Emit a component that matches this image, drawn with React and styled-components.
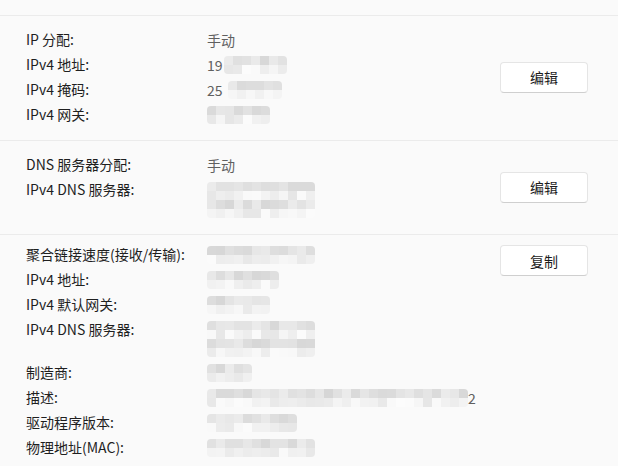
import React from "react";
import styled, { createGlobalStyle } from "styled-components";

const GlobalStyle = createGlobalStyle`
  html, body {
    margin: 0;
    padding: 0;
    background: #fafafa;
  }
  body {
    font-family: "Noto Sans CJK SC", "Noto Sans", sans-serif;
    font-size: 14px;
    color: #1b1b1b;
  }
`;

const Page = styled.div`
  width: 618px;
  height: 466px;
  overflow: hidden;
  background: #fafafa;
`;

const TopStrip = styled.div`
  height: 15px;
  border-bottom: 1px solid #ebebeb;
`;

const Section = styled.section`
  display: flex;
  align-items: ${(p) => (p.$buttonTop ? "flex-start" : "center")};
  padding: ${(p) => p.$pad || "12px 30px 11px 26px"};
  border-bottom: ${(p) => (p.$last ? "none" : "1px solid #ebebeb")};
`;

const Fields = styled.div`
  flex: 1;
  display: grid;
  grid-template-columns: 181px 1fr;
  grid-auto-rows: minmax(25px, auto);
`;

const Label = styled.div`
  height: 25px;
  line-height: 25px;
  color: #1f1f1f;
  white-space: nowrap;
`;

const Value = styled.div`
  display: flex;
  flex-direction: column;
  padding-top: ${(p) => (p.$lines > 1 ? "4px" : "0")};
  padding-bottom: ${(p) => (p.$lines > 1 ? "3px" : "0")};
  min-height: 25px;
  justify-content: ${(p) => (p.$lines > 1 ? "flex-start" : "center")};
`;

const ValueLine = styled.div`
  display: flex;
  align-items: center;
  height: ${(p) => (p.$h ? p.$h : 25)}px;
  color: #606060;
  white-space: nowrap;
`;

const Grid = styled.div`
  display: grid;
  grid-template-columns: repeat(${(p) => p.$cols}, 9px);
  grid-auto-rows: 9px;
  margin-left: ${(p) => p.$offset || 0}px;
  border-radius: 4px;
  overflow: hidden;
`;

const Button = styled.button`
  width: 88px;
  height: 31px;
  margin-top: ${(p) => p.$mt || 0}px;
  border: 1px solid #e5e5e5;
  border-bottom-color: #cfcfcf;
  border-radius: 4px;
  background: #ffffff;
  font-family: "Noto Sans CJK SC", sans-serif;
  font-size: 14px;
  color: #1b1b1b;
  cursor: pointer;
  flex-shrink: 0;
`;

const shade = (seed, i, lineRow) => {
  const x = Math.sin(seed * 97.13 + i * 12.9898) * 43758.5453;
  const r = x - Math.floor(x);
  const base = lineRow === 0 ? 214 : 230;
  const v = Math.round(base + r * 22);
  return `rgb(${v},${v},${v})`;
};

const Mosaic = ({ cols, rows = 2, seed = 1, offset }) => {
  const cells = [];
  for (let r = 0; r < rows; r++) {
    for (let c = 0; c < cols; c++) {
      cells.push(
        <div key={`${r}-${c}`} style={{ background: shade(seed, r * cols + c, r % 2) }} />
      );
    }
  }
  return (
    <Grid $cols={cols} $offset={offset}>
      {cells}
    </Grid>
  );
};

const Row = ({ label, children, lines = 1 }) => (
  <>
    <Label>{label}</Label>
    <Value $lines={lines}>{children}</Value>
  </>
);

export default function App() {
  return (
    <Page>
      <GlobalStyle />
      <TopStrip />

      <Section $pad="11px 30px 13px 26px">
        <Fields>
          <Row label="IP 分配:">
            <ValueLine>手动</ValueLine>
          </Row>
          <Row label="IPv4 地址:">
            <ValueLine>
              19
              <Mosaic cols={7} seed={2} offset={1} />
            </ValueLine>
          </Row>
          <Row label="IPv4 掩码:">
            <ValueLine>
              25
              <Mosaic cols={6} seed={3} offset={5} />
            </ValueLine>
          </Row>
          <Row label="IPv4 网关:">
            <ValueLine>
              <Mosaic cols={7} seed={4} />
            </ValueLine>
          </Row>
        </Fields>
        <Button>编辑</Button>
      </Section>

      <Section $pad="11px 30px 12px 26px">
        <Fields>
          <Row label="DNS 服务器分配:">
            <ValueLine>手动</ValueLine>
          </Row>
          <Row label="IPv4 DNS 服务器:" lines={2}>
            <ValueLine $h={38}>
              <Mosaic cols={12} rows={4} seed={5} />
            </ValueLine>
          </Row>
        </Fields>
        <Button>编辑</Button>
      </Section>

      <Section $buttonTop $last $pad="7px 30px 0 26px">
        <Fields>
          <Row label="聚合链接速度(接收/传输):">
            <ValueLine>
              <Mosaic cols={12} seed={6} />
            </ValueLine>
          </Row>
          <Row label="IPv4 地址:">
            <ValueLine>
              <Mosaic cols={8} seed={7} />
            </ValueLine>
          </Row>
          <Row label="IPv4 默认网关:">
            <ValueLine>
              <Mosaic cols={7} seed={8} />
            </ValueLine>
          </Row>
          <Row label="IPv4 DNS 服务器:" lines={2}>
            <ValueLine $h={36}>
              <Mosaic cols={12} rows={4} seed={9} />
            </ValueLine>
          </Row>
          <Row label="制造商:">
            <ValueLine>
              <Mosaic cols={5} seed={10} />
            </ValueLine>
          </Row>
          <Row label="描述:">
            <ValueLine>
              <Mosaic cols={29} seed={11} />
              2
            </ValueLine>
          </Row>
          <Row label="驱动程序版本:">
            <ValueLine>
              <Mosaic cols={10} seed={12} />
            </ValueLine>
          </Row>
          <Row label="物理地址(MAC):">
            <ValueLine>
              <Mosaic cols={12} seed={13} />
            </ValueLine>
          </Row>
        </Fields>
        <Button $mt={3}>复制</Button>
      </Section>
    </Page>
  );
}
